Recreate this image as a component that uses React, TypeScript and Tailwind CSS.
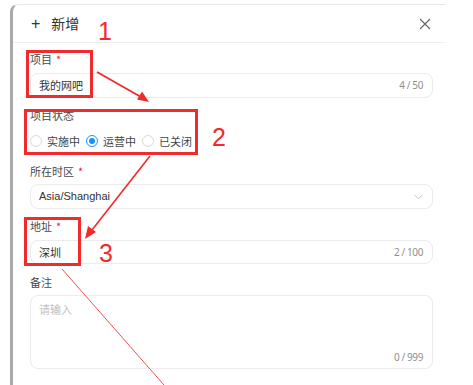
import React from "react";

const cn = '"Noto Sans CJK SC", "Noto Sans", sans-serif';
const mixed = '"Liberation Sans", "Noto Sans CJK SC", sans-serif';

function Label({ text, required }: { text: string; required?: boolean }) {
  return (
    <div className="h-[20px] flex items-center text-[11px] text-[#4a4a4a]" style={{ fontFamily: cn }}>
      <span>{text}</span>
      {required && <span className="ml-[4px] text-[#f5222d]">*</span>}
    </div>
  );
}

function Counter({ text }: { text: string }) {
  return (
    <span className="text-[10px] text-[#8f8f8f] tracking-[-0.4px]" style={{ fontFamily: '"Noto Sans", sans-serif' }}>
      {text}
    </span>
  );
}

function Radio({ label, checked }: { label: string; checked?: boolean }) {
  return (
    <div className="flex items-center mr-[6px]">
      <span
        className={
          "w-[12px] h-[12px] rounded-full border flex items-center justify-center " +
          (checked ? "border-[#1890ff]" : "border-[#d9d9d9]")
        }
      >
        {checked && <span className="w-[6px] h-[6px] rounded-full bg-[#1890ff]" />}
      </span>
      <span className="ml-[5px] text-[11px] text-[#444]" style={{ fontFamily: cn }}>
        {label}
      </span>
    </div>
  );
}

export default function App() {
  return (
    <div className="relative w-[473px] h-[385px] bg-white overflow-hidden">
      <div className="pl-[10px] pt-[4px] h-full">
        <div className="w-[436px] h-full bg-white border-l-[3px] border-l-[#a9a9a9] border-t border-t-[#e8e8e8] rounded-tl-[8px]">
          {/* header */}
          <div className="h-[38px] flex items-center justify-between pl-[18px] pr-[13px] border-b border-b-[#f0f0f0]">
            <div className="flex items-center text-[#333]">
              <span className="text-[16px] leading-none mr-[11px]" style={{ fontFamily: '"Liberation Sans", sans-serif' }}>+</span>
              <span className="text-[14px]" style={{ fontFamily: cn }}>新增</span>
            </div>
            <svg width="12" height="12" viewBox="0 0 12 12" className="mr-[2px]">
              <path d="M1 1L11 11M11 1L1 11" stroke="#666" strokeWidth="1.2" />
            </svg>
          </div>
          {/* body */}
          <div className="pl-[17px] pr-[13px] pt-[6px]">
            <Label text="项目" required />
            <div className="mt-[4px] h-[25px] rounded-[8px] border border-[#ebebeb] flex items-center justify-between pl-[8px] pr-[9px]">
              <span className="text-[11px] text-[#333]" style={{ fontFamily: cn }}>我的网吧</span>
              <Counter text="4 / 50" />
            </div>

            <div className="mt-[7px]">
              <Label text="项目状态" />
            </div>
            <div className="mt-[6px] h-[20px] flex items-center">
              <Radio label="实施中" />
              <Radio label="运营中" checked />
              <Radio label="已关闭" />
            </div>

            <div className="mt-[10px]">
              <Label text="所在时区" required />
            </div>
            <div className="mt-[3px] h-[25px] rounded-[8px] border border-[#ebebeb] flex items-center justify-between pl-[8px] pr-[9px]">
              <span className="text-[11px] text-[#333]" style={{ fontFamily: mixed }}>Asia/Shanghai</span>
              <svg width="9" height="6" viewBox="0 0 9 6">
                <path d="M0.5 0.8L4.5 4.8L8.5 0.8" stroke="#c4c4c4" strokeWidth="1" fill="none" />
              </svg>
            </div>

            <div className="mt-[7px]">
              <Label text="地址" required />
            </div>
            <div className="mt-[4px] h-[24px] rounded-[8px] border border-[#ebebeb] flex items-center justify-between pl-[8px] pr-[9px]">
              <span className="text-[11px] text-[#333]" style={{ fontFamily: cn }}>深圳</span>
              <Counter text="2 / 100" />
            </div>

            <div className="mt-[8px]">
              <Label text="备注" />
            </div>
            <div className="mt-[3px] h-[74px] rounded-[8px] border border-[#ebebeb] flex flex-col justify-between pl-[8px] pr-[9px] pt-[5px] pb-[3px]">
              <span className="text-[11px] text-[#c0c0c0]" style={{ fontFamily: cn }}>请输入</span>
              <div className="flex justify-end">
                <Counter text="0 / 999" />
              </div>
            </div>
          </div>
        </div>
      </div>

      {/* annotations overlay */}
      <svg className="absolute left-0 top-0 pointer-events-none" width="473" height="385" viewBox="0 0 473 385">
        <rect x="27.5" y="51.5" width="64" height="45" fill="none" stroke="#ef2b2b" strokeWidth="3" />
        <rect x="25.5" y="110.5" width="171" height="43" fill="none" stroke="#ef2b2b" strokeWidth="3" />
        <rect x="25.5" y="218.5" width="54" height="46" fill="none" stroke="#ef2b2b" strokeWidth="3" />
        {/* arrow 1 */}
        <line x1="97" y1="72" x2="141" y2="97" stroke="#ef2b2b" strokeWidth="1.8" />
        <polygon points="149,102 137,99.5 142,91.5" fill="#ef2b2b" />
        {/* arrow 2 */}
        <line x1="150" y1="156" x2="92" y2="230" stroke="#ef2b2b" strokeWidth="1.6" />
        <polygon points="85,239 88,226 96,232" fill="#ef2b2b" />
        {/* line 3 */}
        <line x1="62" y1="269" x2="164" y2="385" stroke="#f05050" strokeWidth="1" />
      </svg>
      <span className="absolute left-[98px] top-[16px] text-[25px] leading-[30px] text-[#ef2b2b]" style={{ fontFamily: '"Liberation Sans", sans-serif' }}>1</span>
      <span className="absolute left-[212px] top-[122px] text-[25px] leading-[30px] text-[#ef2b2b]" style={{ fontFamily: '"Liberation Sans", sans-serif' }}>2</span>
      <span className="absolute left-[99px] top-[238px] text-[25px] leading-[30px] text-[#ef2b2b]" style={{ fontFamily: '"Liberation Sans", sans-serif' }}>3</span>
    </div>
  );
}
